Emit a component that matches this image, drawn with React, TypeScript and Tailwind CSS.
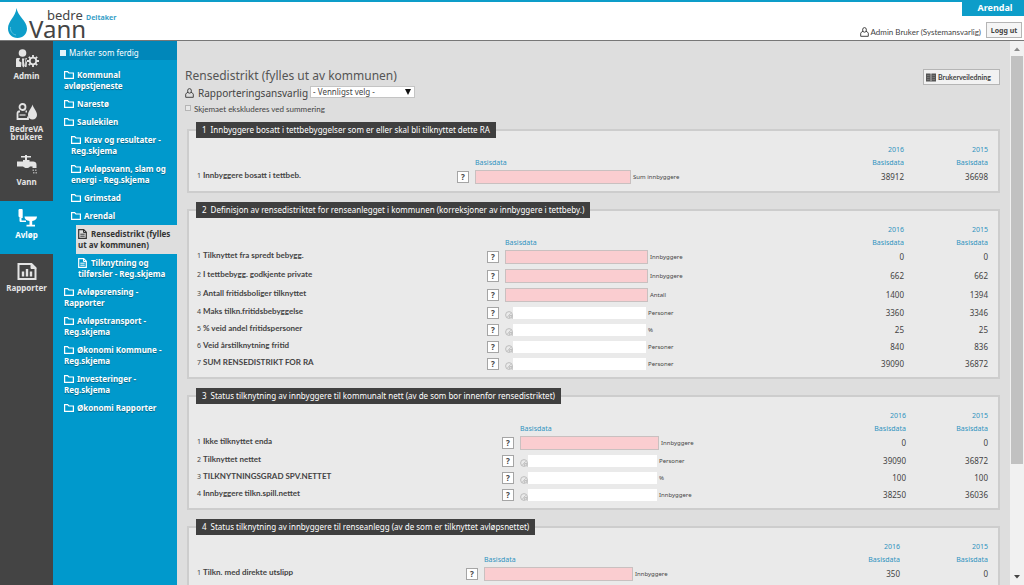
import clsx from "clsx";
import React from "react";

type IconProps = { className?: string };

const AdminIcon: React.FC<IconProps> = ({ className }) => (
  <svg viewBox="0 0 24 20" className={className} fill="currentColor" aria-hidden="true">
    <circle cx="7.500" cy="4" r="3.800" />
    <path d="M1 10.500c0-1 .6-1.500 1.500-1.500H5l-1 3 2.500 1.500-.5 4.500H1z" />
    <path d="M7 9.500h2.500L8.800 12l1 5-1.500 1.500-1-1.500z" />
    <path d="M10.500 9h1.500l-1 2.500 1 2-.5 4.500H10z" />
    <circle cx="18" cy="12" r="3.300" fill="none" stroke="currentColor" strokeWidth="1.800" />
    <path
      d="M18 6v2.300M18 15.700v2.300M12 12h2.300M21.700 12H24M13.800 7.800l1.600 1.600M20.600 14.600l1.600 1.600M22.200 7.800l-1.600 1.600M15.400 14.600l-1.600 1.600"
      stroke="currentColor"
      strokeWidth="1.800"
    />
  </svg>
);

const UserDropIcon: React.FC<IconProps> = ({ className }) => (
  <svg viewBox="0 0 24 20" className={className} fill="none" stroke="currentColor" aria-hidden="true">
    <circle cx="7.500" cy="5" r="3" strokeWidth="1.800" />
    <path d="M5 9.500H4c-1.200 0-1.500 1-1.500 2v5.500h10.500v-2.500M10.500 9.500h1.500" strokeWidth="1.800" />
    <path d="M4.500 13h6" strokeWidth="1.200" />
    <path d="M17.500 2.500c1 4 4.500 6.500 4.500 10.500a4.500 4.500 0 0 1-9 0c0-4 3.500-6.500 4.500-10.500z" fill="currentColor" stroke="none" />
  </svg>
);

const TapIcon: React.FC<IconProps> = ({ className }) => (
  <svg viewBox="0 0 24 20" className={className} fill="currentColor" aria-hidden="true">
    <path d="M6 1h4V0h2v1h4v1.500h-4v2.500h2.500v1.500H18c2 0 3.500 1.200 3.500 3.200V13h-4v-1.500H15c-.8 1-2 1.500-3.500 1.500s-2.700-.6-3.500-1.500H2v-5h6V5h2V2.500H6z" />
    <path d="M17.500 14.500H19V16h-1.500zM20 14.500h1.500V16H20zM18 17h1.500v1.500H18zM20.500 17H22v1.500h-1.500z" opacity=".6" />
  </svg>
);

const ToiletIcon: React.FC<IconProps> = ({ className }) => (
  <svg viewBox="0 0 24 20" className={className} fill="currentColor" aria-hidden="true">
    <path d="M3.500 2.200C3.500 1.300 4 1 4.800 1h1.600c.9 0 1.300.5 1.300 1.300V10H6c-1.700 0-2.500-1-2.500-2.500z" />
    <path d="M4.500 10v2.500c0 1 .6 1.500 1.500 1.500h5v-1.500H6.500V10z" />
    <path d="M9.500 8.500h12.500c0 2.800-1.800 4-4.800 4.400v3.800H20v1.800h-8.500v-1.800h3v-3.800c-3.200-.4-5-1.600-5-4.400z" />
  </svg>
);

const ReportIcon: React.FC<IconProps> = ({ className }) => (
  <svg viewBox="0 0 24 20" className={className} fill="none" stroke="currentColor" strokeWidth="2" aria-hidden="true">
    <path d="M3.500 3h13l4 4v11h-17z" />
    <path d="M16 2.500V7.500h5z" fill="currentColor" strokeWidth="1" />
    <path d="M8 10.500v5M12 8v7.500M16 10.500v5" strokeWidth="2.400" />
  </svg>
);

const FolderIcon = () => (
  <svg viewBox="0 0 10 8" className="mr-[3px] inline h-2 w-[10px] align-[-1px]" fill="none" stroke="currentColor" aria-hidden="true">
    <path d="M.6.700h3l1.300 1.300h4.500v5.400H.6z" strokeWidth="1.200" />
  </svg>
);

const PageIcon = () => (
  <svg viewBox="0 0 9 10" className="mr-1 inline h-[10px] w-[9px] align-[-2px]" fill="none" stroke="currentColor" aria-hidden="true">
    <path d="M.7.700h5l2.600 2.600v6H.7z" strokeWidth="1.200" />
    <path d="M5.500.700v2.800h2.800M2.300 5.200h4.400M2.300 7.200h4.400" />
  </svg>
);

const PersonIcon: React.FC<IconProps> = ({ className }) => (
  <svg viewBox="0 0 9 10" className={className} fill="none" stroke="currentColor" aria-hidden="true">
    <ellipse cx="4.500" cy="2.900" rx="1.900" ry="2.300" />
    <path d="M3 4.500H2L.7 6.200v3.100h7.600V6.200L7 4.500H6" />
  </svg>
);

const BookIcon = () => (
  <svg viewBox="0 0 10 9" className="h-[9px] w-[10px]" aria-hidden="true">
    <path d="M0 .500h4.600v8H0zM5.400.500H10v8H5.400z" fill="#555555" />
    <path d="M4.600 1h.8v8h-.8z" fill="#777777" />
    <path d="M1 2.500h2.600M1 4.500h2.600M1 6.500h2.600M6.400 2.500H9M6.400 4.500H9M6.400 6.500H9" stroke="#999999" strokeWidth=".5" />
  </svg>
);

const LockedIcon = () => (
  <svg viewBox="0 0 8 8" className="h-2 w-2 shrink-0 self-end" fill="none" stroke="#bdbdbd" aria-hidden="true">
    <circle cx="4" cy="4" r="3.400" />
    <path d="M2.200 6.400l3.400-4M4.700 7V4.600h2.500v3.200" />
  </svg>
);

const modules = [
  { label: "Admin", Icon: AdminIcon },
  { label: "BedreVA brukere", Icon: UserDropIcon },
  { label: "Vann", Icon: TapIcon },
  { label: "Avløp", Icon: ToiletIcon, active: true },
  { label: "Rapporter", Icon: ReportIcon },
];

type TreeItem = { label: string; level: 1 | 2 | 3; active?: boolean };

const tree: TreeItem[] = [
  { label: "Kommunal avløpstjeneste", level: 1 },
  { label: "Narestø", level: 1 },
  { label: "Saulekilen", level: 1 },
  { label: "Krav og resultater - Reg.skjema", level: 2 },
  { label: "Avløpsvann, slam og energi - Reg.skjema", level: 2 },
  { label: "Grimstad", level: 2 },
  { label: "Arendal", level: 2 },
  { label: "Rensedistrikt (fylles ut av kommunen)", level: 3, active: true },
  { label: "Tilknytning og tilførsler - Reg.skjema", level: 3 },
  { label: "Avløpsrensing - Rapporter", level: 1 },
  { label: "Avløpstransport - Reg.skjema", level: 1 },
  { label: "Økonomi Kommune - Reg.skjema", level: 1 },
  { label: "Investeringer - Reg.skjema", level: 1 },
  { label: "Økonomi Rapporter", level: 1 },
];

type Row = {
  label: string;
  unit: string;
  values: [string, string];
  locked?: boolean;
};

type Section = {
  title: string;
  labelCol: string;
  inputCol: string;
  lastCol: string;
  rows: Row[];
};

const sections: Section[] = [
  {
    title: "Innbyggere bosatt i tettbebyggelser som er eller skal bli tilknyttet dette RA",
    labelCol: "w-[260px]",
    inputCol: "w-[156px]",
    lastCol: "w-[84px]",
    rows: [
      { label: "Innbyggere bosatt i tettbeb.", unit: "Sum innbyggere", values: ["38912", "36698"] },
    ],
  },
  {
    title: "Definisjon av rensedistriktet for renseanlegget i kommunen (korreksjoner av innbyggere i tettbeby.)",
    labelCol: "w-[290px]",
    inputCol: "w-[143px]",
    lastCol: "w-[84px]",
    rows: [
      { label: "Tilknyttet fra spredt bebygg.", unit: "Innbyggere", values: ["0", "0"] },
      { label: "I tettbebygg. godkjente private", unit: "Innbyggere", values: ["662", "662"] },
      { label: "Antall fritidsboliger tilknyttet", unit: "Antall", values: ["1400", "1394"] },
      { label: "Maks tilkn.fritidsbebyggelse", unit: "Personer", values: ["3360", "3346"], locked: true },
      { label: "% veid andel fritidspersoner", unit: "%", values: ["25", "25"], locked: true },
      { label: "Veid årstilknytning fritid", unit: "Personer", values: ["840", "836"], locked: true },
      { label: "SUM RENSEDISTRIKT FOR RA", unit: "Personer", values: ["39090", "36872"], locked: true },
    ],
  },
  {
    title: "Status tilknytning av innbyggere til kommunalt nett (av de som bor innenfor rensedistriktet)",
    labelCol: "w-[305px]",
    inputCol: "w-[139px]",
    lastCol: "w-[82px]",
    rows: [
      { label: "Ikke tilknyttet enda", unit: "Innbyggere", values: ["0", "0"] },
      { label: "Tilknyttet nettet", unit: "Personer", values: ["39090", "36872"], locked: true },
      { label: "TILKNYTNINGSGRAD SPV.NETTET", unit: "%", values: ["100", "100"], locked: true },
      { label: "Innbyggere tilkn.spill.nettet", unit: "Innbyggere", values: ["38250", "36036"], locked: true },
    ],
  },
  {
    title: "Status tilknytning av innbyggere til renseanlegg (av de som er tilknyttet avløpsnettet)",
    labelCol: "w-[269px]",
    inputCol: "w-[149px]",
    lastCol: "w-[88px]",
    rows: [
      { label: "Tilkn. med direkte utslipp", unit: "Innbyggere", values: ["350", "0"] },
    ],
  },
];

const Header = () => (
  <header className="flex h-[41px] shrink-0 justify-between border-t-2 border-b border-t-[#0d9dc9] border-b-[#777777] bg-white">
    <a href="#" className="flex pl-2">
      <svg viewBox="0 0 19 30" className="mt-[6px] h-[30px] w-[19px]" aria-hidden="true">
        <path d="M8.500 0c1 8 10.500 13 10.500 20.500C19 26 15 30 9.500 30S0 26 0 20.500C0 13 7.500 9 8.500 0z" fill="#0d9dc9" />
        <path d="M2.500 19c-.5 4 2 7.500 5.500 8" fill="none" stroke="#5cc0df" strokeWidth="1" />
      </svg>
      <span className="flex flex-col pt-2 pl-[2px] text-[#444444]">
        <span className="pl-[18px] text-[13px] leading-[11px]">bedre</span>
        <span className="text-[24px] leading-[16px]">Vann</span>
      </span>
      <span className="mt-[11px] text-[7px] leading-[10px] font-bold text-[#3a9fc8]">Deltaker</span>
    </a>
    <div className="flex flex-col items-end">
      <div className="flex h-[14px] w-[62px] items-center justify-center bg-[#0d9dc9] pb-[2px] pl-1 text-[9px] font-bold text-white">
        Arendal
      </div>
      <div className="mt-[6px] flex items-center gap-[5px] pr-[2px]">
        <span className="flex items-center gap-[2px] pt-1 font-['Lato',sans-serif] text-[8px] text-[#444444]">
          <PersonIcon className="h-[10px] w-[9px]" />
          Admin Bruker (Systemansvarlig)
        </span>
        <button className="h-4 w-9 border border-[#b5b5b5] bg-[#f5f5f5] text-[7px] leading-none font-bold text-[#444444]">
          Logg ut
        </button>
      </div>
    </div>
  </header>
);

const ModuleRail = () => (
  <nav className="w-[53px] shrink-0 bg-[#444444] pt-px">
    {modules.map(({ label, Icon, active }) => (
      <a
        key={label}
        href="#"
        className={clsx(
          "flex h-[53px] flex-col items-center gap-[3px] pt-[7px] text-center text-[8px] leading-[8px] font-bold",
          active ? "bg-[#0099cc] text-white" : "text-[#e4e4e4]"
        )}
      >
        <Icon className="h-5 w-6 shrink-0" />
        {label}
      </a>
    ))}
  </nav>
);

const TreeMenu = () => (
  <nav className="w-[124px] shrink-0 bg-[#0099cc] text-[8px] leading-[11px] text-white">
    <label className="flex h-[19px] items-center gap-[3px] bg-[#0087ba] pt-1 pl-[7px]">
      <input type="checkbox" className="size-[6px] appearance-none bg-[#e4f2f8]" />
      Marker som ferdig
    </label>
    <ul className="mt-[6px] font-bold">
      {tree.map(({ label, level, active }) => (
        <li
          key={label}
          className={clsx(
            level === 1 && "ml-[9px]",
            level === 2 && "ml-4",
            level === 3 && "ml-[23px]",
            active && "bg-[#dedede] text-[#333333]"
          )}
        >
          <a
            href="#"
            className={clsx(
              "block py-[3px] pb-1 pl-[2px]",
              !active && "[text-shadow:0_1px_1px_rgba(0,0,0,0.35)]"
            )}
          >
            {level === 3 ? <PageIcon /> : <FolderIcon />}
            {label}
          </a>
        </li>
      ))}
    </ul>
  </nav>
);

const FormSection: React.FC<{ section: Section; number: number }> = ({
  section,
  number,
}) => (
  <fieldset className="mb-[9px] min-w-0 border-2 border-[#cdcdcd] bg-[#eaeaea] pt-1 pr-[10px] pb-[5px] pl-[7px]">
    <legend className="h-4 bg-[#3f3f3f] px-[6px] text-[8px] leading-[15px] whitespace-nowrap text-white">
      <span className="mr-1">{number}</span>
      {section.title}
    </legend>
    <table className="w-full table-fixed text-[8px] text-[#444444]">
      <colgroup>
        <col className={section.labelCol} />
        <col className="w-[19px]" />
        <col className={section.inputCol} />
        <col />
        <col className="w-[60px]" />
        <col className={section.lastCol} />
      </colgroup>
      <thead className="text-[7px] leading-[9px] text-[#2f93bf]">
        <tr className="h-3 align-bottom">
          <td colSpan={4}></td>
          <th className="p-0 text-right font-normal">2016</th>
          <th className="p-0 text-right font-normal">2015</th>
        </tr>
        <tr className="h-[13px] align-bottom">
          <td colSpan={2}></td>
          <th className="p-0 text-left font-normal">Basisdata</th>
          <td></td>
          <th className="p-0 text-right font-normal">Basisdata</th>
          <th className="p-0 text-right font-normal">Basisdata</th>
        </tr>
      </thead>
      <tbody>
        {section.rows.map(({ label, unit, values, locked }, i) => {
          const id = `field-${number}-${i + 1}`;
          return (
            <tr key={id} className={locked ? "h-[17px]" : "h-[19px]"}>
              <td className="p-0 pb-[2px] pl-px leading-[11px]">
                <label htmlFor={id} className="flex gap-[2px]">
                  <span className="text-[7px]">{i + 1}</span>
                  <span className="font-['Lato',sans-serif] font-bold">{label}</span>
                </label>
              </td>
              <td className="p-0 pl-px">
                <button
                  aria-label={`Hjelp: ${label}`}
                  className="block size-3 border border-[#a5a5a5] bg-white text-[8px] leading-[10px] font-bold"
                >
                  ?
                </button>
              </td>
              <td className="p-0">
                {locked ? (
                  <div className="flex h-3 pr-[2px]">
                    <LockedIcon />
                    <input id={id} readOnly className="h-3 min-w-0 flex-1 bg-white" />
                  </div>
                ) : (
                  <input id={id} className="block h-[14px] w-full border border-[#c9c0c0] bg-[#facdd0]" />
                )}
              </td>
              <td className={clsx("p-0 pt-[2px] text-[6px] leading-[9px]", !locked && "pl-[2px]")}>{unit}</td>
              <td className="p-0 text-right leading-[11px]">{values[0]}</td>
              <td className="p-0 text-right leading-[11px]">{values[1]}</td>
            </tr>
          );
        })}
      </tbody>
    </table>
  </fieldset>
);

const Scrollbar = () => (
  <div className="flex w-[14px] shrink-0 flex-col items-center bg-[#f1f1f1]" aria-hidden="true">
    <svg viewBox="0 0 14 15" className="h-[15px] w-[14px]">
      <path d="M4 10l3-3.500 3 3.500z" fill="#8a8a8a" />
    </svg>
    <div className="h-3/4 w-3 bg-[#c1c1c1]"></div>
    <svg viewBox="0 0 14 15" className="mt-auto h-[15px] w-[14px]">
      <path d="M4 5l3 3.500L10 5z" fill="#444444" />
    </svg>
  </div>
);

const App = () => (
  <div className="flex h-screen flex-col overflow-hidden font-['Noto_Sans',sans-serif]">
    <Header />
    <div className="flex min-h-0 flex-1">
      <ModuleRail />
      <TreeMenu />
      <main className="min-w-0 flex-1 overflow-hidden bg-[#dedede] pt-[27px] pr-[10px] pl-2 text-[#444444]">
        <div className="flex items-start justify-between">
          <div>
            <h1 className="text-[12px] leading-4 text-[#555555]">
              Rensedistrikt (fylles ut av kommunen)
            </h1>
            <div className="flex h-[18px] items-center">
              <PersonIcon className="mr-1 h-[10px] w-[9px]" />
              <label htmlFor="responsible" className="mr-[2px] text-[10px]">
                Rapporteringsansvarlig
              </label>
              <span className="relative mb-[2px] flex">
                <select
                  id="responsible"
                  className="h-3 w-[105px] appearance-none border border-[#c4c4c4] bg-white pl-[2px] text-[8px] leading-[10px]"
                >
                  <option>- Vennligst velg -</option>
                </select>
                <svg viewBox="0 0 6 6" className="pointer-events-none absolute top-[3px] right-1 size-[6px]" aria-hidden="true">
                  <path d="M0 0h6L3 6z" fill="#111111" />
                </svg>
              </span>
            </div>
            <label className="flex h-[14px] items-center gap-[3px] font-['Lato',sans-serif] text-[8px]">
              <input type="checkbox" className="mb-[2px] size-[6px] appearance-none border border-[#b5b5b5] bg-[#e8e8e8]" />
              Skjemaet ekskluderes ved summering
            </label>
          </div>
          <button className="mt-[1px] flex h-4 w-[77px] items-center gap-[2px] border border-[#b5b5b5] bg-[#f2f2f2] pl-[2px] font-['Lato',sans-serif] text-[7px] font-bold">
            <BookIcon />
            Brukerveiledning
          </button>
        </div>
        <div className="mt-[6px] pl-[2px]">
          {sections.map((section, i) => (
            <FormSection key={section.title} section={section} number={i + 1} />
          ))}
        </div>
      </main>
      <Scrollbar />
    </div>
  </div>
);

export default App;
